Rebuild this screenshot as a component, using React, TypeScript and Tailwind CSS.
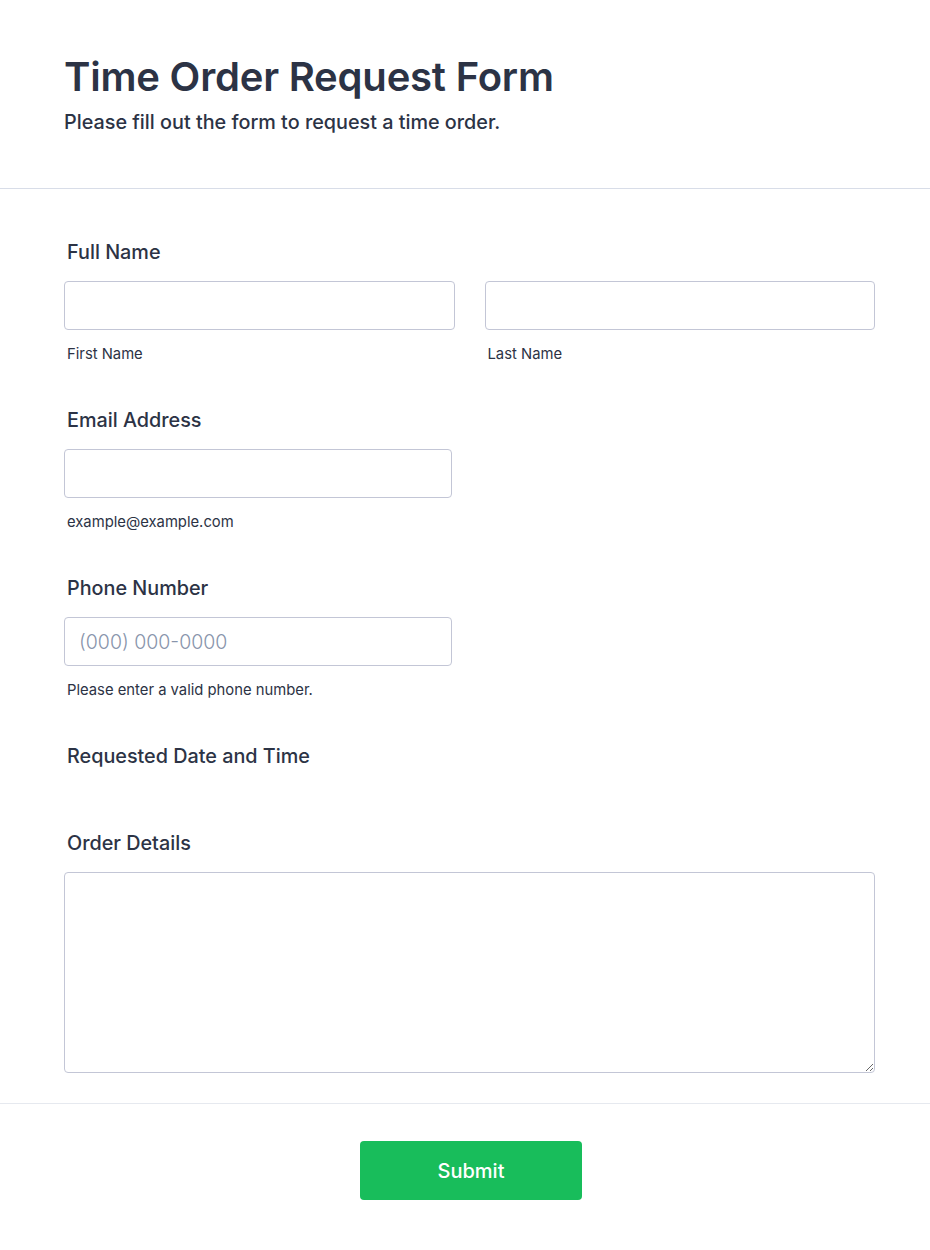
import React from "react";

const font = { fontFamily: "Inter, 'Noto Sans', sans-serif" };

function Label({ children }: { children: React.ReactNode }) {
  return (
    <div className="pl-[3px] text-[19.8px] leading-6 font-medium text-[#2c3345] -translate-y-[0.5px]">{children}</div>
  );
}

function Sub({ children }: { children: React.ReactNode }) {
  return <div className="mt-[13px] pl-[3px] text-[14.8px] leading-5 text-[#2c3345] translate-y-[1px]">{children}</div>;
}

const inputCls =
  "block w-full h-[49px] mt-[17px] rounded-[4px] border border-[#c3c6d6] bg-white px-[14px] text-[19.5px] font-light text-[#2c3345] placeholder:text-[#8894ab] outline-none";

export default function App() {
  return (
    <div className="min-h-[1250px] bg-white text-[#2c3345]" style={font}>
      <header className="border-b border-[#d8dde8] pl-[64px] pr-[55px] pt-[53px] pb-[54px]">
        <h1 className="text-[40px] leading-[48px] font-semibold tracking-[-0.2px]">Time Order Request Form</h1>
        <p className="mt-[9px] text-[19.8px] leading-6 font-medium">Please fill out the form to request a time order.</p>
      </header>

      <form className="pl-[64px] pr-[55px] pt-[51px]" onSubmit={(e) => e.preventDefault()}>
        <Label>Full Name</Label>
        <div className="grid grid-cols-2 gap-[30px]">
          <div>
            <input className={inputCls} />
            <Sub>First Name</Sub>
          </div>
          <div>
            <input className={inputCls} />
            <Sub>Last Name</Sub>
          </div>
        </div>

        <div className="mt-[45px] w-[388px]">
          <Label>Email Address</Label>
          <input className={inputCls} />
          <Sub>example@example.com</Sub>
        </div>

        <div className="mt-[45px] w-[388px]">
          <Label>Phone Number</Label>
          <input className={inputCls} placeholder="(000) 000-0000" />
          <Sub>Please enter a valid phone number.</Sub>
        </div>

        <div className="mt-[45px]">
          <Label>Requested Date and Time</Label>
        </div>

        <div className="mt-[63px]">
          <Label>Order Details</Label>
          <textarea className="block w-full h-[201px] mt-[17px] rounded-[4px] border border-[#c3c6d6] bg-white px-[14px] py-[10px] text-[16px] outline-none" />
        </div>
      </form>

      <div className="mt-[30px] border-t border-[#e6e9ef] pt-[37px] pb-[50px] pl-[64px] pr-[52px] flex justify-center">
        <button
          type="button"
          className="w-[222px] h-[59px] rounded-[4px] bg-[#18bd5b] text-white text-[20px] font-medium"
        >
          Submit
        </button>
      </div>
    </div>
  );
}
